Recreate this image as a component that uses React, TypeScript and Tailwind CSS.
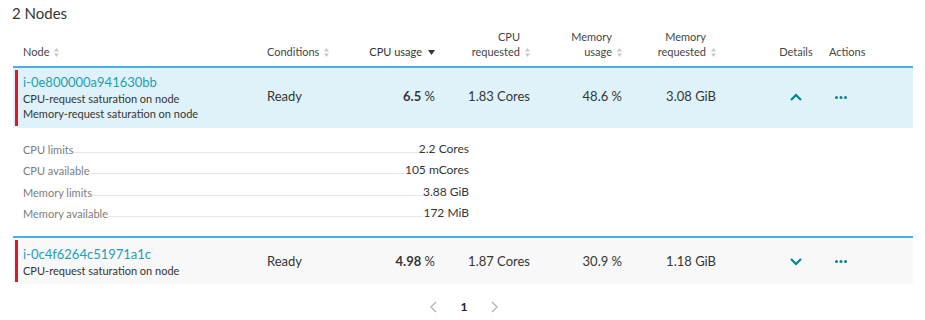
import React from 'react';

const font = { fontFamily: 'Lato, "Liberation Sans", sans-serif' };

const SortIcon = () => (
  <svg width="5" height="9" viewBox="0 0 5 9" className="inline-block ml-[5px] align-[-1px]">
    <path d="M2.5 0 L5 3.5 L0 3.5 Z" fill="#c8c8c8" />
    <path d="M2.5 9 L5 5.5 L0 5.5 Z" fill="#c8c8c8" />
  </svg>
);

const SortDown = () => (
  <svg width="7" height="5" viewBox="0 0 7 5" className="inline-block ml-[6px] align-[1px]">
    <path d="M0 0 L7 0 L3.5 5 Z" fill="#353535" />
  </svg>
);

const Chevron = ({ up }: { up: boolean }) => (
  <svg width="12" height="8" viewBox="0 0 12 8" className="inline-block">
    <path d={up ? 'M1 7 L6 2 L11 7' : 'M1 1 L6 6 L11 1'} fill="none" stroke="#00848e" strokeWidth="2.2" />
  </svg>
);

const Dots = () => (
  <svg width="12" height="3" viewBox="0 0 12 3" className="inline-block">
    <circle cx="1.5" cy="1.5" r="1.5" fill="#00848e" />
    <circle cx="6" cy="1.5" r="1.5" fill="#00848e" />
    <circle cx="10.5" cy="1.5" r="1.5" fill="#00848e" />
  </svg>
);

const cols = 'grid grid-cols-[244px_78px_90px_95px_92px_94px_113px_1fr]';

type Node = {
  id: string;
  problems: string[];
  cpu: string;
  cpuReq: string;
  memUsage: string;
  memReq: string;
  open: boolean;
};

const nodes: Node[] = [
  {
    id: 'i-0e800000a941630bb',
    problems: ['CPU-request saturation on node', 'Memory-request saturation on node'],
    cpu: '6.5',
    cpuReq: '1.83 Cores',
    memUsage: '48.6 %',
    memReq: '3.08 GiB',
    open: true,
  },
  {
    id: 'i-0c4f6264c51971a1c',
    problems: ['CPU-request saturation on node'],
    cpu: '4.98',
    cpuReq: '1.87 Cores',
    memUsage: '30.9 %',
    memReq: '1.18 GiB',
    open: false,
  },
];

const details = [
  ['CPU limits', '2.2 Cores'],
  ['CPU available', '105 mCores'],
  ['Memory limits', '3.88 GiB'],
  ['Memory available', '172 MiB'],
];

const Row = ({ n }: { n: Node }) => (
  <div className={`border-t-2 border-[#4ab0de] ${n.open ? 'bg-[#dff2fa]' : 'bg-[#f8f8f8]'} py-[2px] pl-[2px]`}>
    <div className="flex">
      <div className="w-[3px] bg-[#dc172a] shrink-0" />
      <div className={`${cols} items-center flex-1 pl-[5px] ${n.open ? 'pt-[3px] pb-[5px]' : 'pt-[5px] pb-[4px]'} text-[13px] text-[#353535]`}>
        <div className="flex flex-col">
          <span className="text-[13px] leading-[18px] text-[#1c9fb2]">{n.id}</span>
          {n.problems.map((p) => (
            <span key={p} className="text-[11px] leading-[15px] text-[#353535]">{p}</span>
          ))}
        </div>
        <div>Ready</div>
        <div className="text-right"><span className="font-bold">{n.cpu}</span> %</div>
        <div className="text-right">{n.cpuReq}</div>
        <div className="text-right">{n.memUsage}</div>
        <div className="text-right">{n.memReq}</div>
        <div className="pl-[50px] pr-[3px] flex justify-center">
          <Chevron up={n.open} />
        </div>
        <div className="pl-[6px] flex">
          <Dots />
        </div>
      </div>
    </div>
  </div>
);

export default function App() {
  return (
    <div className="w-[925px] h-[320px] bg-white pl-[13px] pr-[12px]" style={font}>
      <h2 className="text-[15px] leading-[20px] text-[#353535] pt-[3px] -ml-[1px]">2 Nodes</h2>

      {/* header */}
      <div className={`${cols} items-end pl-[10px] pt-[6px] pb-[7px] text-[11px] leading-[15px] text-[#454646]`}>
        <div>Node<SortIcon /></div>
        <div>Conditions<SortIcon /></div>
        <div className="text-right text-[#353535]">CPU usage<SortDown /></div>
        <div className="text-right">CPU<span className="inline-block w-[10px]" /><br />requested<SortIcon /></div>
        <div className="text-right">Memory<span className="inline-block w-[10px]" /><br />usage<SortIcon /></div>
        <div className="text-right">Memory<span className="inline-block w-[10px]" /><br />requested<SortIcon /></div>
        <div className="pl-[50px] pr-[3px] text-center">Details</div>
        <div>Actions</div>
      </div>

      <Row n={nodes[0]} />

      {/* expanded details */}
      <div className="pl-[10px] pt-[7px] pb-[15px] w-[456px]">
        {details.map(([k, v]) => (
          <div key={k} className="flex items-end h-[21.5px]">
            <span className="text-[11px] leading-[15px] text-[#7c7c7c]">{k}</span>
            <div className="flex-1 border-b border-[#e6e6e6] mb-[4px]" />
            <span className="text-[12px] leading-[16px] text-[#353535]">{v}</span>
          </div>
        ))}
      </div>

      <Row n={nodes[1]} />

      {/* pagination */}
      <div className="flex items-center justify-center gap-[22px] pt-[14px] pl-[2px]">
        <svg width="7" height="12" viewBox="0 0 7 12">
          <path d="M6 1 L1 6 L6 11" fill="none" stroke="#b4b4b4" strokeWidth="1.4" />
        </svg>
        <span className="text-[12px] font-bold text-[#222] px-[2px]">1</span>
        <svg width="7" height="12" viewBox="0 0 7 12">
          <path d="M1 1 L6 6 L1 11" fill="none" stroke="#b4b4b4" strokeWidth="1.4" />
        </svg>
      </div>
    </div>
  );
}
